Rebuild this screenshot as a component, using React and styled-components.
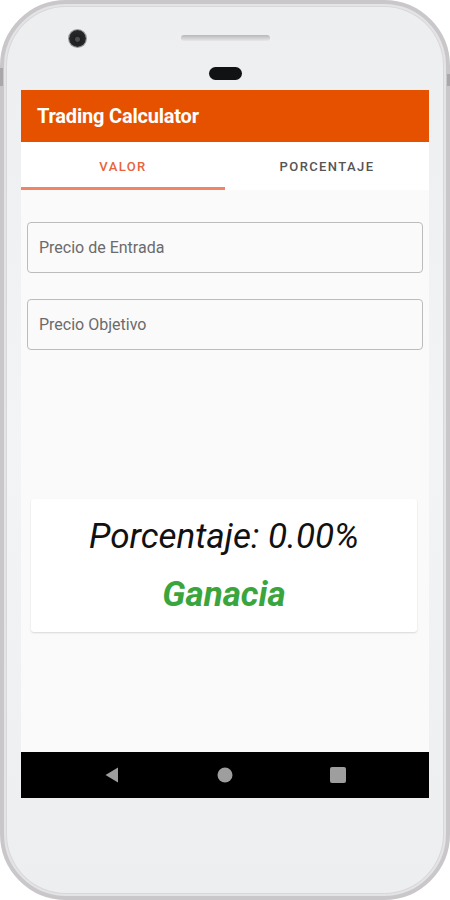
import React from "react";
import styled, { createGlobalStyle } from "styled-components";

const Global = createGlobalStyle`
  html, body { margin: 0; padding: 0; background: #ffffff; }
  body { font-family: Roboto, "Liberation Sans", sans-serif; }
  * { box-sizing: border-box; }
`;

const Phone = styled.div`
  width: 450px;
  height: 900px;
  border: 4px solid #c9c7ca;
  border-radius: 66px;
  background: linear-gradient(180deg, #eceef0 0%, #f3f4f5 50%, #eceef0 100%);
  box-shadow: inset 0 0 0 2px #e4e3e5, inset 0 0 0 3px #d8d7da;
  padding: 0 17px;
  display: flex;
  flex-direction: column;
  position: relative;
`;

const SideButton = styled.div`
  position: absolute;
  top: ${(p) => p.$top}px;
  ${(p) => (p.$right ? "right: -4px;" : "left: -4px;")}
  width: 3px;
  height: ${(p) => p.$h}px;
  background: #a9a7aa;
`;

const TopBezel = styled.div`
  height: 86px;
  display: flex;
  flex-direction: column;
  align-items: center;
  position: relative;
`;

const Camera = styled.div`
  position: absolute;
  left: 48px;
  top: 26px;
  width: 17px;
  height: 17px;
  border-radius: 50%;
  background: radial-gradient(circle at 50% 55%, #4a4d4e 0 2px, #1e2021 3px, #2c2e2f 100%);
  box-shadow: 0 0 0 1px #9a9a9c;
`;

const Speaker = styled.div`
  margin-top: 31px;
  width: 89px;
  height: 6px;
  border-radius: 3px;
  background: linear-gradient(180deg, #b8b8ba 0%, #d4d4d6 60%, #e8e8ea 100%);
`;

const Sensor = styled.div`
  margin-top: 26px;
  width: 33px;
  height: 13px;
  border-radius: 7px;
  background: #111213;
`;

const Screen = styled.div`
  height: 708px;
  background: #fafafa;
  display: flex;
  flex-direction: column;
`;

const AppBar = styled.div`
  height: 52px;
  background: #e65100;
  display: flex;
  align-items: center;
  padding: 0 16px;
  color: #ffffff;
  font-size: 20px;
  font-weight: 700;
  letter-spacing: -0.2px;
`;

const Tabs = styled.div`
  height: 48px;
  background: #ffffff;
  display: flex;
`;

const Tab = styled.div`
  flex: 1;
  display: flex;
  align-items: center;
  justify-content: center;
  font-size: 13px;
  font-weight: 500;
  letter-spacing: 1.4px;
  color: ${(p) => (p.$active ? "#e8643a" : "#555555")};
  border-bottom: 3px solid ${(p) => (p.$active ? "#f08468" : "transparent")};
  padding-top: 3px;
`;

const Form = styled.div`
  padding: 32px 6px 0;
  display: flex;
  flex-direction: column;
  gap: 26px;
`;

const Field = styled.div`
  height: 51px;
  border: 1px solid #bcbcbc;
  border-radius: 4px;
  display: flex;
  align-items: center;
  padding: 0 11px;
  font-size: 16px;
  color: #6b6b6b;
  background: #fafafa;
`;

const Spacer = styled.div`
  flex: 1;
`;

const Card = styled.div`
  margin: 149px 12px 0 10px;
  height: 133px;
  background: #ffffff;
  border-radius: 3px;
  box-shadow: 0 1px 2px rgba(0, 0, 0, 0.14);
  display: flex;
  flex-direction: column;
  align-items: center;
  padding-top: 17px;
  gap: 16px;
`;

const Percent = styled.div`
  font-size: 35px;
  font-style: italic;
  color: #111111;
  line-height: 42px;
`;

const Result = styled.div`
  font-size: 35px;
  font-style: italic;
  font-weight: 700;
  color: #3aa53d;
  line-height: 42px;
`;

const NavBar = styled.div`
  height: 46px;
  background: #000000;
  display: flex;
  align-items: center;
  justify-content: space-between;
  padding: 0 82px;
`;

const NavIcon = styled.svg`
  width: 18px;
  height: 18px;
  display: block;
`;

export default function App() {
  return (
    <>
      <Global />
      <Phone>
        <SideButton $top={64} $h={18} />
        <SideButton $top={70} $h={12} $right />
        <TopBezel>
          <Camera />
          <Speaker />
          <Sensor />
        </TopBezel>
        <Screen>
          <AppBar>Trading Calculator</AppBar>
          <Tabs>
            <Tab $active>VALOR</Tab>
            <Tab>PORCENTAJE</Tab>
          </Tabs>
          <Form>
            <Field>Precio de Entrada</Field>
            <Field>Precio Objetivo</Field>
          </Form>
          <Card>
            <Percent>Porcentaje: 0.00%</Percent>
            <Result>Ganacia</Result>
          </Card>
          <Spacer />
          <NavBar>
            <NavIcon viewBox="0 0 18 18">
              <path d="M15 1.5 L15 16.5 L2.5 9 Z" fill="#9e9e9e" />
            </NavIcon>
            <NavIcon viewBox="0 0 18 18">
              <circle cx="9" cy="9" r="7.5" fill="#9e9e9e" />
            </NavIcon>
            <NavIcon viewBox="0 0 18 18">
              <rect x="1" y="1" width="16" height="16" rx="2" fill="#9e9e9e" />
            </NavIcon>
          </NavBar>
        </Screen>
      </Phone>
    </>
  );
}
